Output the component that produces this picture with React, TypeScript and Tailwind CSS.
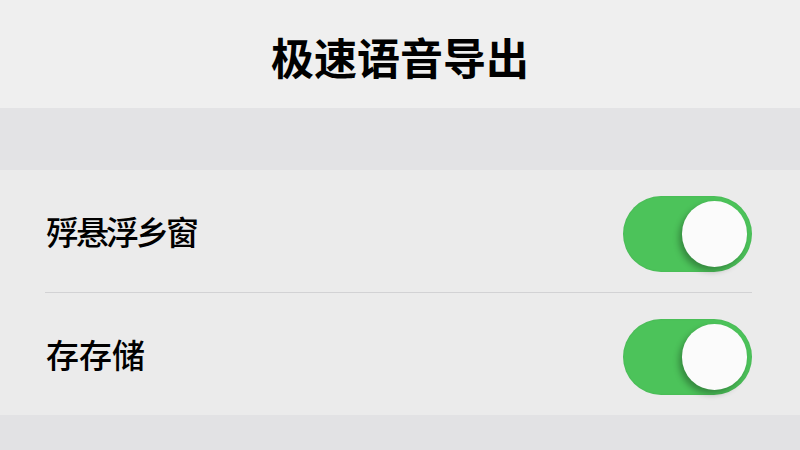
import React from "react";

const font = { fontFamily: '"Noto Sans CJK SC", "Noto Sans", sans-serif' };

function Toggle() {
  return (
    <div className="relative mt-[5px] w-[129px] h-[76px] rounded-full bg-[#4cc35a] flex items-center justify-end pr-[5px] shadow-[inset_0_0_2px_rgba(0,0,0,0.1)]">
      <div className="w-[65px] h-[66px] rounded-full bg-[#fbfbfb] shadow-[-3px_4px_6px_rgba(0,0,0,0.3)]" />
    </div>
  );
}

export default function App() {
  return (
    <div className="w-[800px] h-[450px] overflow-hidden bg-[#ebebeb] flex flex-col" style={font}>
      <div className="h-[108px] bg-[#efefef] flex items-center justify-center pt-[4px]">
        <span className="text-[43px] font-bold text-black leading-none">极速语音导出</span>
      </div>
      <div className="h-[62px] bg-[#e3e3e5]" />
      <div className="h-[122px] flex items-center justify-between pl-[46px] pr-[48px] bg-[#ebebeb]">
        <span className="text-[33px] font-medium text-black leading-none tracking-[-3px]">殍悬浮乡窗</span>
        <Toggle />
      </div>
      <div className="ml-[45px] mr-[48px] h-[1px] bg-[#d2d2d4]" />
      <div className="h-[122px] flex items-center justify-between pl-[46px] pr-[48px] bg-[#ebebeb]">
        <span className="text-[33px] font-medium text-black leading-none">存存储</span>
        <Toggle />
      </div>
      <div className="flex-1 bg-[#e2e2e4]" />
    </div>
  );
}
